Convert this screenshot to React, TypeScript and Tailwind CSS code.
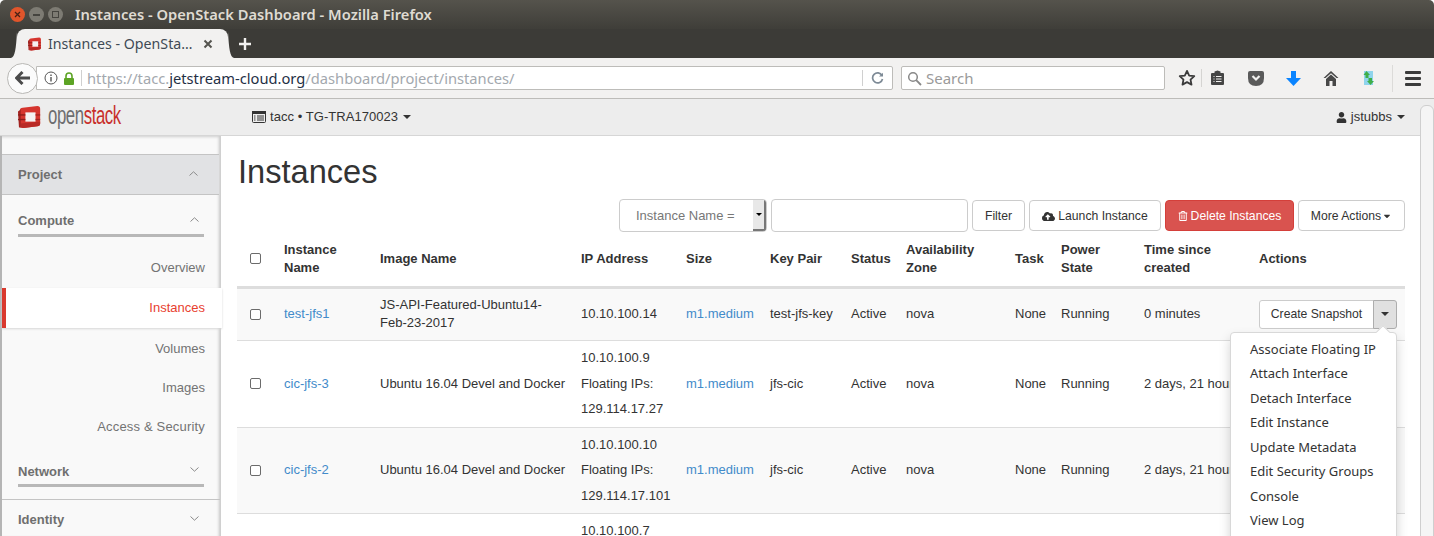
import React from "react";
import { FaUser, FaRegTrashAlt, FaCloudUploadAlt, FaCaretDown } from "react-icons/fa";

const Caret = ({ className = "" }: { className?: string }) => (
  <span className={"inline-block w-0 h-0 border-x-[4px] border-x-transparent border-t-[4px] border-t-[#333] " + className} />
);

const Logo = ({ size = 26 }: { size?: number }) => (
  <svg width={size} height={size} viewBox="0 0 26 26">
    <path d="M2 6 Q2 3 5 3 L21 1 Q24 1 24 4 L24 20 Q24 23 21 23 L6 25 Q3 25 2 23 Z" fill="#d5352e" />
    <path d="M0 7 L3 5 L3 25 L1 24 Z" fill="#a32320" />
    <path d="M3 20 L24 18 L24 20 Q24 23 21 23 L6 25 Q3 25 3 23 Z" fill="#b92a26" />
    <rect x="8" y="8" width="11" height="10" fill="#f4f2f2" />
    <rect x="0" y="10" width="8" height="1.5" fill="#8f1d1a" />
    <rect x="0" y="15" width="8" height="1.5" fill="#8f1d1a" />
    <rect x="19" y="10" width="5" height="1.5" fill="#a32320" />
    <rect x="19" y="15" width="5" height="1.5" fill="#a32320" />
  </svg>
);

const WinBtn = ({ bg, children }: { bg: string; children: React.ReactNode }) => (
  <div className={"w-[15px] h-[15px] rounded-full flex items-center justify-center text-[9px] leading-none text-[#3c3b37] " + bg}>{children}</div>
);

function TitleBar() {
  return (
    <div className="h-[29px] bg-gradient-to-b from-[#55534c] to-[#3f3e39] flex items-center pl-[10px] rounded-t-[5px]">
      <div className="flex gap-[4px] items-center">
        <WinBtn bg="bg-[#e0552b]"><svg width="7" height="7" viewBox="0 0 7 7"><path d="M1 1L6 6M6 1L1 6" stroke="#4a2014" strokeWidth="1.3" /></svg></WinBtn>
        <WinBtn bg="bg-[#7d7b73]"><div className="w-[7px] h-[2px] bg-[#45443f]" /></WinBtn>
        <WinBtn bg="bg-[#7d7b73]"><div className="w-[7px] h-[7px] border border-[#45443f]" /></WinBtn>
      </div>
      <div className="ml-[12px] text-[14.7px] font-semibold text-[#dfdbd2] font-['Noto_Sans',sans-serif] whitespace-nowrap">
        Instances - OpenStack Dashboard - Mozilla Firefox
      </div>
    </div>
  );
}

function TabBar() {
  return (
    <div className="h-[29px] bg-[#3c3b37] flex items-stretch pl-[11px]">
      <svg width="6" height="29" viewBox="0 0 6 29" className="shrink-0"><path d="M0 29 C4 28 5 20 6 3 V29Z" fill="#f2f1f0" /></svg>
      <div className="w-[211px] bg-[#f2f1f0] rounded-t-[8px] flex items-center pl-[11px] pr-[15px]">
        <Logo size={14} />
        <span className="ml-[6px] text-[14.2px] text-[#3f4a55] font-['Noto_Sans',sans-serif] whitespace-nowrap">Instances - OpenSta…</span>
        <svg className="ml-auto" width="10" height="10" viewBox="0 0 10 10"><path d="M1.5 1.5L8.5 8.5M8.5 1.5L1.5 8.5" stroke="#55544f" strokeWidth="2" /></svg>
      </div>
      <svg width="6" height="29" viewBox="0 0 6 29" className="shrink-0"><path d="M6 29 C2 28 1 20 0 3 V29Z" fill="#f2f1f0" /></svg>
      <div className="ml-[4px] flex items-center">
        <svg width="14" height="14" viewBox="0 0 14 14"><path d="M7 1V13M1 7H13" stroke="#f2f1f0" strokeWidth="2.4" /></svg>
      </div>
    </div>
  );
}

function NavBar() {
  return (
    <div className="h-[41px] bg-[#f2f1f0] border-b border-[#bdbcb9] flex items-center pl-[7px] relative">
      <div className="w-[31px] h-[31px] rounded-full bg-[#fbfbfb] border border-[#b9b8b5] flex items-center justify-center z-10">
        <svg width="16" height="14" viewBox="0 0 16 14"><path d="M7.5 1L1.5 7L7.5 13M2 7H15" fill="none" stroke="#4b4b4b" strokeWidth="3" /></svg>
      </div>
      <div className="-ml-[2px] w-[857px] h-[24px] bg-white border border-[#bdbcb9] rounded-r-[2px] flex items-center pl-[7px] font-['Noto_Sans',sans-serif] text-[14.7px]">
        <svg width="14" height="14" viewBox="0 0 14 14"><circle cx="7" cy="7" r="6" fill="none" stroke="#555" strokeWidth="1" /><path d="M7 6V10.5M7 3.5V5" stroke="#555" strokeWidth="1.4" /></svg>
        <svg className="ml-[5px]" width="12" height="13" viewBox="0 0 12 13"><path d="M3 6V4a3 3 0 0 1 6 0v2" fill="none" stroke="#5da425" strokeWidth="1.6" /><rect x="1" y="6" width="10" height="7" rx="1" fill="#5da425" /></svg>
        <div className="ml-[6px] w-px h-[16px] bg-[#d0d0d0]" />
        <span className="ml-[5px] whitespace-nowrap text-[#a3a8ae]">https://tacc.<span className="text-[#1f2f45]">jetstream-cloud.org</span>/dashboard/project/instances/</span>
        <div className="ml-auto w-px h-[16px] bg-[#d0d0d0]" />
        <svg className="mx-[8px]" width="13" height="13" viewBox="0 0 13 13"><path d="M11 3.5A5 5 0 1 0 11.5 7" fill="none" stroke="#7d8a96" strokeWidth="1.7" /><path d="M8 4.5H12V0.8Z" fill="#7d8a96" /></svg>
      </div>
      <div className="ml-[8px] w-[264px] h-[24px] bg-white border border-[#bdbcb9] rounded-[2px] flex items-center pl-[5px]">
        <svg width="15" height="15" viewBox="0 0 15 15"><circle cx="6" cy="6" r="4.3" fill="none" stroke="#888" strokeWidth="1.5" /><path d="M9.2 9.2L14 14" stroke="#888" strokeWidth="1.8" /></svg>
        <span className="ml-[4px] text-[15px] text-[#9a9a9a] font-['Noto_Sans',sans-serif]">Search</span>
      </div>
      <div className="ml-[13px] flex items-center">
        <svg width="18" height="18" viewBox="0 0 24 24"><path d="M12 2.5l2.9 6.2 6.8.8-5 4.6 1.3 6.7L12 17.5l-6 3.3 1.3-6.7-5-4.6 6.8-.8z" fill="none" stroke="#3b3b3b" strokeWidth="2.4" strokeLinejoin="round" /></svg>
        <div className="ml-[5px] w-px h-[18px] bg-[#d5d4d2]" />
        <svg className="ml-[8px]" width="15" height="16" viewBox="0 0 15 16"><path d="M1 4Q1 3 2 3H4.5V1.5L7.5 0.5L10.5 1.5V3H13Q14 3 14 4V14Q14 15 13 15H2Q1 15 1 14Z" fill="#454545" /><path d="M3.5 6.5H4.5M6 6.5H11.5M3.5 9H4.5M6 9H11.5M3.5 11.5H4.5M6 11.5H11.5" stroke="#f2f1f0" strokeWidth="1.2" /></svg>
        <svg className="ml-[23px]" width="16" height="15" viewBox="0 0 16 15"><path d="M0 2Q0 0 2 0H14Q16 0 16 2V7Q16 15 8 15Q0 15 0 7Z" fill="#5a5a5a" /><path d="M4.5 5L8 8.5L11.5 5" fill="none" stroke="#f2f1f0" strokeWidth="2.2" /></svg>
        <svg className="ml-[22px]" width="15" height="15" viewBox="0 0 15 15"><path d="M5 0H10V7H15L7.5 15L0 7H5Z" fill="#0a84ff" /></svg>
        <svg className="ml-[22px]" width="16" height="15" viewBox="0 0 16 15"><path d="M8 0L0.5 7H2.5L8 2.2L13.5 7H15.5Z" fill="#484848" /><path d="M3 8L8 3.5L13 8V15H9.5V10H6.5V15H3Z" fill="#484848" /></svg>
        <svg className="ml-[23px]" width="13" height="16" viewBox="0 0 13 16"><rect x="2" y="1" width="9" height="14" fill="#8fd4ec" /><path d="M4.5 1L8 5H6.5V8H3.5V5H1.5Z" fill="#3fae49" /><path d="M8.5 15L5 11H6.5V8H10V11H12Z" fill="#3fae49" /></svg>
        <div className="ml-[17px] w-px h-[27px] bg-[#dcdbd9]" />
        <div className="ml-[12px] w-[16px] flex flex-col gap-[3px]">
          <div className="h-[3px] bg-[#3b3b3b] rounded-[1px]" />
          <div className="h-[3px] bg-[#3b3b3b] rounded-[1px]" />
          <div className="h-[3px] bg-[#3b3b3b] rounded-[1px]" />
        </div>
      </div>
    </div>
  );
}

function DashNav() {
  return (
    <div className="h-[37px] shrink-0 bg-[#ededed] border-b border-[#d6d6d6] flex items-center pl-[18px] pr-[29px] text-[13px] text-[#333]">
      <Logo size={24} />
      <span className="ml-[6px] w-[73px] text-[25px] leading-none font-['Liberation_Sans',sans-serif] text-[#6d6e70] tracking-[-0.6px] -mt-[3px] whitespace-nowrap origin-left scale-x-[0.67]">open<span className="text-[#c8302b]">stack</span></span>
      <svg className="ml-[131px]" width="14" height="12" viewBox="0 0 14 12"><rect x="0.5" y="0.5" width="13" height="11" rx="1" fill="none" stroke="#333" /><rect x="0" y="0" width="14" height="3" fill="#333" /><path d="M2 5H3.5M5 5H12M2 7H3.5M5 7H12M2 9H3.5M5 9H12" stroke="#333" /></svg>
      <span className="ml-[4px] font-['Liberation_Sans',sans-serif] tracking-[0.05px]">tacc • TG-TRA170023</span>
      <Caret className="ml-[5px]" />
      <div className="ml-auto flex items-center font-['Liberation_Sans',sans-serif]">
        <FaUser size={11} className="text-[#333]" />
        <span className="ml-[4px]">jstubbs</span>
        <Caret className="ml-[5px]" />
      </div>
    </div>
  );
}

const SideHead = ({ label, up, line }: { label: string; up?: boolean; line?: boolean }) => (
  <div className={"mx-[16px] flex items-center justify-between pr-[5px] font-bold text-[#6f6f6f] text-[13px] " + (line ? "border-b-[3px] border-[#b8b8b8] pb-[3px]" : "")}>
    <span>{label}</span>
    <svg width="9" height="5" viewBox="0 0 9 5" className="-mt-[3px]"><path d={up ? "M0.5 4.5L4.5 0.8L8.5 4.5" : "M0.5 0.5L4.5 4.2L8.5 0.5"} fill="none" stroke="#8a8a8a" strokeWidth="1" /></svg>
  </div>
);

const SideLink = ({ label, h }: { label: string; h: string }) => (
  <div className={"flex items-center justify-end pr-[15px] text-[13px] text-[#737373] " + h}>{label}</div>
);

function Sidebar() {
  return (
    <div className="w-[219px] shrink-0 ml-[2px] bg-[#f9f9f9] shadow-[inset_-3px_0_3px_-2px_#c4c4c4] border-r border-[#d0d0d0] relative flex flex-col font-['Liberation_Sans',sans-serif]">
      <div className="h-[18px] shadow-[inset_0_3px_3px_-2px_#cfcfcf]" />
      <div className="h-[41px] flex items-center bg-[#e1e2e4] border-y border-[#c4c4c4] mr-px">
        <div className="w-full"><SideHead label="Project" up /></div>
      </div>
      <div className="pt-[16px]"><SideHead label="Compute" up line /></div>
      <SideLink label="Overview" h="h-[51px] pt-[12px]" />
      <div className="h-[40px] -mr-[2px] bg-white border-l-[4px] border-[#d9392e] flex items-center justify-end pr-[17px] text-[13px] text-[#e8412f] shadow-[0_1px_2px_#d6d6d6] relative z-10">Instances</div>
      <SideLink label="Volumes" h="h-[41px] pt-[1px]" />
      <SideLink label="Images" h="h-[38px]" />
      <SideLink label="Access & Security" h="h-[40px] tracking-[0.18px]" />
      <div className="pt-[15px]"><SideHead label="Network" line /></div>
      <div className="mt-[12px] border-t border-[#c4c4c4] pt-[10px]"><SideHead label="Identity" /></div>
    </div>
  );
}

const Btn = ({ className = "", children }: { className?: string; children: React.ReactNode }) => (
  <div className={"h-[31px] pt-px border border-[#cccccc] rounded-[4px] flex items-center justify-center text-[12.2px] text-[#333] bg-white whitespace-nowrap " + className}>{children}</div>
);

const Check = () => <div className="w-[11px] h-[11px] border border-[#6b6b6b] rounded-[2px] bg-white mx-auto -translate-x-[1px]" />;

const SplitBtn = () => (
  <div className="flex w-[138px] h-[29px] text-[12.2px] text-[#333]">
    <div className="w-[115px] border border-[#ccc] rounded-l-[3px] bg-white flex items-center justify-center whitespace-nowrap">Create Snapshot</div>
    <div className="w-[24px] -ml-px border border-[#adadad] rounded-r-[3px] bg-[#e0e0e0] flex items-center justify-center"><Caret /></div>
  </div>
);

const Link = ({ children }: { children: React.ReactNode }) => <a className="text-[#428bca]">{children}</a>;

const rows = [
  { h: "h-[53px]", bg: "bg-[#f9f9f9]", name: "test-jfs1", image: <>JS-API-Featured-Ubuntu14-<br />Feb-23-2017</>, ip: ["10.10.100.14"], key: "test-jfs-key", time: "0 minutes" },
  { h: "h-[87px]", bg: "bg-white", name: "cic-jfs-3", image: "Ubuntu 16.04 Devel and Docker", ip: ["10.10.100.9", "Floating IPs:", "129.114.17.27"], key: "jfs-cic", time: "2 days, 21 hours" },
  { h: "h-[86px]", bg: "bg-[#f9f9f9]", name: "cic-jfs-2", image: "Ubuntu 16.04 Devel and Docker", ip: ["10.10.100.10", "Floating IPs:", "129.114.17.101"], key: "jfs-cic", time: "2 days, 21 hours" },
  { h: "h-[86px]", bg: "bg-white", name: "cic-jfs-1", image: "Ubuntu 16.04 Devel and Docker", ip: ["10.10.100.7", "Floating IPs:", "129.114.17.55"], key: "jfs-cic", time: "2 days, 21 hours" },
];

const th = "font-bold text-left px-[8px] align-middle leading-[18px] border-b-[3px] border-[#dddddd]";
const td = "px-[8px] align-middle border-b border-[#dddddd] leading-[18px]";

function Table() {
  return (
    <table className="w-[1168px] table-fixed border-collapse text-[13px] text-[#333]">
      <colgroup>
        <col className="w-[39px]" /><col className="w-[96px]" /><col className="w-[201px]" /><col className="w-[105px]" /><col className="w-[84px]" /><col className="w-[81px]" /><col className="w-[55px]" /><col className="w-[109px]" /><col className="w-[46px]" /><col className="w-[83px]" /><col className="w-[115px]" /><col className="w-[154px]" />
      </colgroup>
      <thead>
        <tr className="h-[55px]">
          <th className={th}><Check /></th>
          <th className={th}>Instance Name</th>
          <th className={th}>Image Name</th>
          <th className={th}>IP Address</th>
          <th className={th}>Size</th>
          <th className={th}>Key Pair</th>
          <th className={th}>Status</th>
          <th className={th}>Availability Zone</th>
          <th className={th}>Task</th>
          <th className={th}>Power State</th>
          <th className={th}>Time since created</th>
          <th className={th}>Actions</th>
        </tr>
      </thead>
      <tbody>
        {rows.map((r) => (
          <tr key={r.name} className={r.h + " " + r.bg}>
            <td className={td}><Check /></td>
            <td className={td}><Link>{r.name}</Link></td>
            <td className={td}>{r.image}</td>
            <td className={td + " whitespace-nowrap"}>
              {r.ip.map((l) => <div key={l} className={r.ip.length > 1 ? "leading-[25.5px]" : ""}>{l}</div>)}
            </td>
            <td className={td}><Link>m1.medium</Link></td>
            <td className={td}>{r.key}</td>
            <td className={td}>Active</td>
            <td className={td}>nova</td>
            <td className={td}>None</td>
            <td className={td}>Running</td>
            <td className={td + " whitespace-nowrap"}>{r.time}</td>
            <td className={td}><SplitBtn /></td>
          </tr>
        ))}
      </tbody>
    </table>
  );
}

function Dropdown() {
  const items = ["Associate Floating IP", "Attach Interface", "Detach Interface", "Edit Instance", "Update Metadata", "Edit Security Groups", "Console", "View Log", "Rebuild"];
  return (
    <div className="absolute left-[1230px] top-[332px] w-[167px] h-[240px] bg-white border border-[#d8d8d8] rounded-[4px] shadow-[0_6px_12px_rgba(0,0,0,0.175)] pt-[3.5px] pl-[19px] text-[13px] text-[#333] z-20">
      {items.map((i) => <div key={i} className="h-[24.5px] leading-[24.5px] whitespace-nowrap">{i}</div>)}
      <div className="absolute -top-[6px] left-[147px] w-[10px] h-[10px] bg-white border-l border-t border-[#d8d8d8] rotate-45" />
    </div>
  );
}

function Content() {
  return (
    <div className="flex-1 min-w-0 bg-white pl-[16px] font-['Liberation_Sans',sans-serif] overflow-hidden">
      <h1 className="text-[32.6px] leading-[36px] text-[#333] mt-[18px] ml-px">Instances</h1>
      <div className="mt-[9px] w-[1168px] flex justify-end gap-[4px] items-center">
        <div className="w-[148px] h-[33px] border border-[#cccccc] rounded-[4px] flex items-center relative overflow-hidden">
          <span className="ml-[16px] text-[13px] text-[#777]">Instance Name =</span>
          <div className="absolute right-0 top-0 bottom-0 w-[13px] bg-[#e8e8e8] border-r-2 border-b-2 border-[#777] flex items-center justify-center"><span className="inline-block w-0 h-0 border-x-[3px] border-x-transparent border-t-[3px] border-t-black" /></div>
        </div>
        <div className="w-[197px] h-[33px] border border-[#cccccc] rounded-[4px]" />
        <Btn className="w-[53px]">Filter</Btn>
        <Btn className="w-[132px]"><FaCloudUploadAlt size={13} className="mr-[3px]" />Launch Instance</Btn>
        <Btn className="w-[129px] !bg-[#d9534f] !border-[#d43f3a] !text-white"><FaRegTrashAlt size={10} className="mr-[3px]" />Delete Instances</Btn>
        <Btn className="w-[107px]">More Actions<FaCaretDown size={10} className="ml-[1px]" /></Btn>
      </div>
      <Table />
    </div>
  );
}

export default function App() {
  return (
    <div className="w-[1434px] h-[536px] overflow-hidden relative bg-white flex flex-col">
      <TitleBar />
      <TabBar />
      <NavBar />
      <DashNav />
      <div className="flex flex-1 min-h-0 bg-[#b5b5b5]">
        <Sidebar />
        <Content />
      </div>
      <Dropdown />
      <div className="absolute left-[1420px] top-[105px] w-[14px] h-[440px] bg-[#f5f5f5] border border-[#cfcfcf] rounded-t-[6px] z-30" />
    </div>
  );
}
